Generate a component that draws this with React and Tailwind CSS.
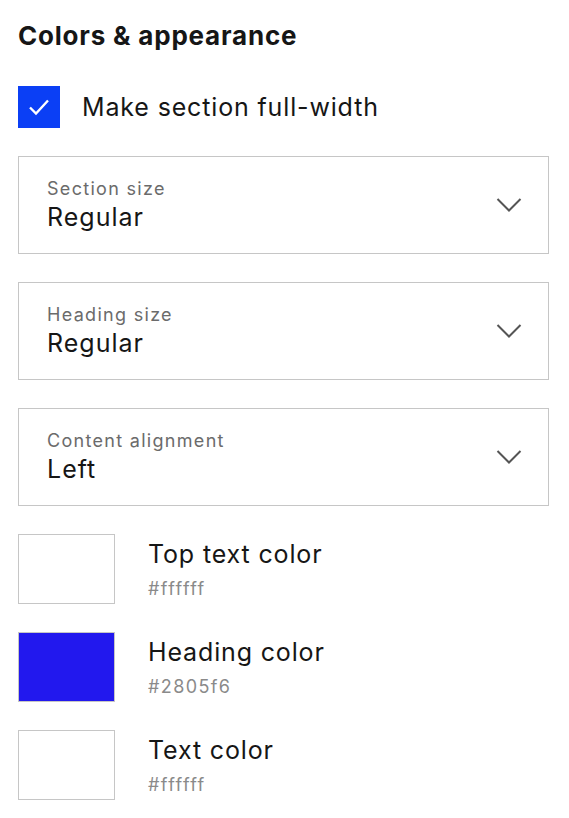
import React from 'react';

const font = { fontFamily: 'Inter, "Liberation Sans", sans-serif' };

const Chevron = () => (
  <svg width="26" height="16" viewBox="0 0 26 16" fill="none" className="text-[#555]">
    <path d="M1.5 2 L13 13.5 L24.5 2" stroke="currentColor" strokeWidth="2" />
  </svg>
);

const SelectBox = ({ label, value }) => (
  <div className="flex items-center justify-between border border-[#c6c6c6] h-[98px] pl-[28px] pr-[26px]">
    <div className="flex flex-col">
      <span className="text-[18px] leading-[24px] tracking-[1.3px] text-[#6b6b6b]">{label}</span>
      <span className="text-[25px] leading-[32px] tracking-[1px] text-[#161616]">{value}</span>
    </div>
    <Chevron />
  </div>
);

const ColorRow = ({ label, hex, swatch }) => (
  <div className="flex items-center gap-[33px]">
    <div className={`w-[97px] h-[70px] border border-[#c6c6c6] ${swatch}`} />
    <div className="flex flex-col">
      <span className="text-[25px] leading-[32px] tracking-[0.85px] text-[#161616]">{label}</span>
      <span className="text-[18px] leading-[24px] tracking-[1.4px] text-[#8a8a8a] mt-[7px]">{hex}</span>
    </div>
  </div>
);

export default function App() {
  return (
    <div style={font} className="bg-white min-h-screen w-[569px] px-[18px] pt-[20px]">
      <h2 className="text-[26px] leading-[32px] font-bold tracking-[0.8px] text-[#161616]">Colors &amp; appearance</h2>

      <div className="flex items-center gap-[22px] mt-[34px]">
        <div className="w-[42px] h-[42px] bg-[#0b3ff5] flex items-center justify-center">
          <svg width="22" height="18" viewBox="0 0 22 18" fill="none">
            <path d="M2 9.5 L8 15.5 L20 2.5" stroke="white" strokeWidth="2.4" />
          </svg>
        </div>
        <span className="text-[25px] leading-[32px] tracking-[0.85px] text-[#161616]">Make section full-width</span>
      </div>

      <div className="flex flex-col gap-[28px] mt-[28px] w-[531px]">
        <SelectBox label="Section size" value="Regular" />
        <SelectBox label="Heading size" value="Regular" />
        <SelectBox label="Content alignment" value="Left" />
      </div>

      <div className="flex flex-col gap-[28px] mt-[28px]">
        <ColorRow label="Top text color" hex="#ffffff" swatch="bg-white" />
        <ColorRow label="Heading color" hex="#2805f6" swatch="bg-[#2218ee]" />
        <ColorRow label="Text color" hex="#ffffff" swatch="bg-white" />
      </div>
    </div>
  );
}
